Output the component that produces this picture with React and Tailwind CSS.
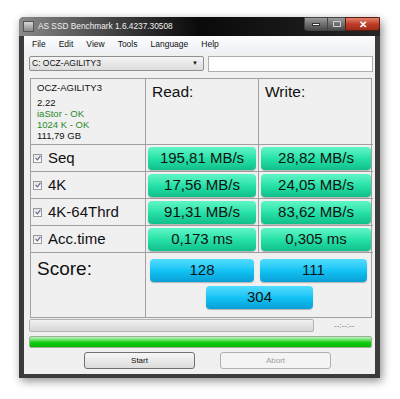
const results = [
  { label: "Seq", read: "195,81 MB/s", write: "28,82 MB/s" },
  { label: "4K", read: "17,56 MB/s", write: "24,05 MB/s" },
  { label: "4K-64Thrd", read: "91,31 MB/s", write: "83,62 MB/s" },
  { label: "Acc.time", read: "0,173 ms", write: "0,305 ms" },
];

const GreenBar = ({ children }) => (
  <div className="h-[23px] rounded-[4px] bg-gradient-to-b from-[#5ef5c8] via-[#26e2a8] to-[#0fbf8a] shadow-[0_1px_1px_rgba(0,0,0,0.25)] flex items-center justify-center text-[15px] text-[#111]">
    {children}
  </div>
);

const BlueBar = ({ children, className = "" }) => (
  <div
    className={`h-[23px] rounded-[4px] bg-gradient-to-b from-[#4fdcff] via-[#12c4f4] to-[#0a9fd6] shadow-[0_1px_1px_rgba(0,0,0,0.25)] flex items-center justify-center text-[15px] text-[#111] ${className}`}
  >
    {children}
  </div>
);

const Check = () => (
  <div className="w-[9px] h-[9px] border border-[#9a9a9a] bg-gradient-to-b from-[#e4e4e4] to-white flex items-center justify-center">
    <svg width="6" height="6" viewBox="0 0 6 6">
      <path d="M0.6 3 L2.4 4.8 L5.4 0.8" stroke="#5a6a90" strokeWidth="1.1" fill="none" />
    </svg>
  </div>
);

export default function App() {
  return (
    <div className="w-[400px] h-[399px] bg-white overflow-hidden pt-[17px] pl-[19px]" style={{ fontFamily: '"Liberation Sans", Arial, sans-serif' }}>
      <div className="w-[361px] h-[361px] flex flex-col bg-[#3b3b3b] shadow-[2px_3px_10px_rgba(0,0,0,0.45)] rounded-t-[5px]">
        {/* title bar */}
        <div className="h-[19px] flex items-center rounded-t-[5px] bg-gradient-to-r from-[#8a8a8a] via-[#0a0a0a] to-[#262626] relative">
          <div className="ml-[4px] w-[11px] h-[11px] bg-gradient-to-b from-[#d8d8d8] to-[#8a8a8a] border border-[#555]"></div>
          <span className="ml-[4px] text-[8.3px] text-[#f0f0f0]">AS SSD Benchmark 1.6.4237.30508</span>
          <div className="absolute right-0 top-0 flex h-[14px]">
            <div className="w-[24px] h-[14px] border border-[#444] rounded-bl-[3px] bg-gradient-to-b from-[#9a9a9a] to-[#4a4a4a] flex items-center justify-center">
              <div className="w-[8px] h-[3px] bg-white border border-[#333]"></div>
            </div>
            <div className="w-[17px] h-[14px] border-y border-[#444] bg-gradient-to-b from-[#9a9a9a] to-[#4a4a4a] flex items-center justify-center">
              <div className="w-[8px] h-[6px] border border-[#cfcfcf]"></div>
            </div>
            <div className="w-[35px] h-[14px] border border-[#5a1a10] rounded-br-[3px] bg-gradient-to-b from-[#e0806a] via-[#c03c28] to-[#9c2c1a] flex items-center justify-center text-white text-[10px] font-bold">
              ✕
            </div>
          </div>
        </div>
        {/* client */}
        <div className="mx-[5px] mb-[4px] flex-1 bg-[#f0f0f0] flex flex-col text-[#111]">
          {/* menu */}
          <div className="h-[17px] bg-gradient-to-b from-[#fbfcfd] to-[#eef1f5] flex items-center text-[8.5px] pl-[8px] gap-[13px]">
            <span>File</span>
            <span>Edit</span>
            <span>View</span>
            <span>Tools</span>
            <span>Language</span>
            <span>Help</span>
          </div>
          {/* drive select */}
          <div className="flex mt-[3px] pl-[5px] gap-[4px]">
            <div className="w-[175px] h-[15px] border border-[#8e8f8f] rounded-[2px] bg-gradient-to-b from-[#f4f4f4] to-[#dcdcdc] flex items-center justify-between px-[2px] text-[8.5px]">
              <span>C: OCZ-AGILITY3</span>
              <span className="text-[6px] mr-[3px]">▼</span>
            </div>
            <div className="w-[165px] h-[16px] border border-[#abadb3] bg-white"></div>
          </div>
          {/* table */}
          <div className="ml-[6px] mt-[6px] w-[342px] border border-[#a0a0a0] grid grid-cols-[115px_113px_114px]">
            <div className="h-[66px] border-r border-b border-[#a0a0a0] pl-[6px] pt-[3px] text-[9.5px] leading-[11px]">
              <div className="mb-[4px]">OCZ-AGILITY3</div>
              <div>2.22</div>
              <div className="text-[#2a8a2a]">iaStor - OK</div>
              <div className="text-[#2a8a2a]">1024 K - OK</div>
              <div>111,79 GB</div>
            </div>
            <div className="h-[66px] border-r border-b border-[#a0a0a0] pl-[6px] pt-[1px] text-[15.5px]">Read:</div>
            <div className="h-[66px] border-b border-[#a0a0a0] pl-[6px] pt-[1px] text-[15.5px]">Write:</div>
            {results.map((r) => (
              <div key={r.label} className="contents">
                <div className="h-[27px] border-r border-b border-[#a0a0a0] flex items-center pl-[2px] gap-[6px] text-[15px]">
                  <Check />
                  <span>{r.label}</span>
                </div>
                <div className="h-[27px] border-r border-b border-[#a0a0a0] px-[2px] pt-[2px]">
                  <GreenBar>{r.read}</GreenBar>
                </div>
                <div className="h-[27px] border-b border-[#a0a0a0] px-[2px] pt-[2px]">
                  <GreenBar>{r.write}</GreenBar>
                </div>
              </div>
            ))}
            <div className="h-[64px] border-r border-[#a0a0a0] pl-[6px] pt-[2px] text-[19px]">Score:</div>
            <div className="col-span-2 h-[64px] pt-[6px] flex flex-col">
              <div className="flex gap-[6px] pl-[4px] pr-[3px]">
                <BlueBar className="w-[104px]">128</BlueBar>
                <BlueBar className="w-[107px]">111</BlueBar>
              </div>
              <div className="mt-[4px] ml-[60px]">
                <BlueBar className="w-[107px]">304</BlueBar>
              </div>
            </div>
          </div>
          {/* progress */}
          <div className="flex items-center mt-[1px] pl-[5px]">
            <div className="w-[285px] h-[13px] border border-[#b2b2b2] rounded-[2px] bg-gradient-to-b from-[#f2f2f2] to-[#d6d6d6]"></div>
            <span className="ml-[20px] text-[8px] text-[#777]">--:--:--</span>
          </div>
          <div className="ml-[5px] mt-[4px] w-[343px] h-[12px] border border-[#9ab09a] rounded-[2px] bg-gradient-to-b from-[#b8f5b8] via-[#10d010] to-[#08b808]"></div>
          <div className="flex mt-[4px] pl-[60px] gap-[25px]">
            <div className="w-[111px] h-[17px] border border-[#707070] rounded-[3px] bg-gradient-to-b from-[#f6f6f6] to-[#dcdcdc] flex items-center justify-center text-[8px]">
              Start
            </div>
            <div className="w-[111px] h-[17px] border border-[#adb2b5] rounded-[3px] bg-[#f4f4f4] flex items-center justify-center text-[8px] text-[#a0a0a0]">
              Abort
            </div>
          </div>
        </div>
      </div>
    </div>
  );
}
